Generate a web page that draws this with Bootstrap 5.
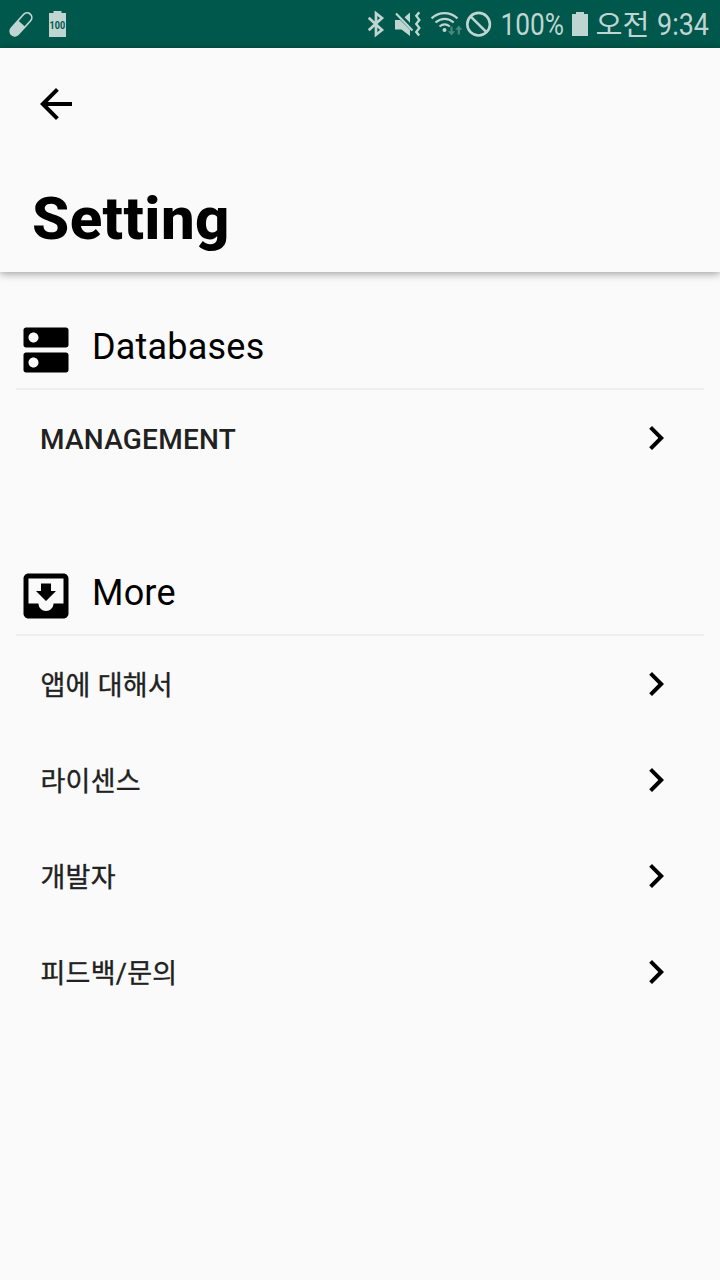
<!DOCTYPE html>
<html lang="ko">
<head>
<meta charset="utf-8">
<meta name="viewport" content="width=device-width, initial-scale=1">
<title>Setting</title>
<link href="https://cdn.jsdelivr.net/npm/bootstrap@5.3.0/dist/css/bootstrap.min.css" rel="stylesheet">
<style>
body{background:#fafafa;color:#000;font-family:Roboto,"Noto Sans CJK KR",sans-serif;min-height:1280px}
svg{display:block;flex:none}
.status-bar{height:48px;background:#00574b;color:#bfd5d2;padding-left:8px}
.app-head{height:224px;padding:32px 32px 0;box-shadow:0 2px 8px rgba(0,0,0,.36)}
.page-title{font-size:60px;line-height:70px;font-weight:850;letter-spacing:.4px;margin-top:56px;margin-bottom:0}
.section-head{height:70px;padding-bottom:8px;border-bottom:2px solid #eee}
.section-title{font-size:36px;line-height:42px;font-weight:400;margin:6px 0 0 16px;letter-spacing:.2px}
.setting-row{height:96px;padding:0 24px;color:#212121;font-size:28px;font-weight:500;line-height:40px}
.setting-row span{padding-top:4px;letter-spacing:.25px}
.setting-row svg{color:#000;margin-bottom:1px}
.korean{font-size:27px;font-weight:400;-webkit-text-stroke:.35px #212121}
.korean span{padding-top:4px;padding-left:.5px}
</style>
</head>
<body>
<header class="status-bar d-flex align-items-center">
  <svg width="68" height="48" viewBox="8 0 68 48" fill="currentColor">
    <g transform="rotate(-48 21 24.3)"><rect x="6.3" y="18.8" width="29.4" height="11" rx="5.5"/><path d="M22 20.4h8a3.9 3.9 0 0 1 0 7.8h-8z" fill="#00574b"/></g>
    <path d="M49 13h4.5v-2h8v2H66v24H49z"/>
    <text x="49.5" y="29" font-size="10.5" font-weight="700" fill="#00574b" textLength="15.6" lengthAdjust="spacingAndGlyphs">100</text>
  </svg>
  <svg class="ms-auto" width="355" height="48" viewBox="365 0 355 48" fill="currentColor">
    <path d="M368.7 17.8 382 30 376 34.7V13.3L382 18 368.7 30.2" fill="none" stroke="currentColor" stroke-width="2.7"/>
    <path d="M395 20h5.2l9.8 9.8V36l-8.5-6.5H395zM404.5 17.2 410 12.5v10.2z"/>
    <path d="m396 13.5 16.5 17" stroke="currentColor" stroke-width="2.2"/>
    <path d="m419.3 12.3-3 3.6 3 4-3 4 3 4-3 4 2.8 3.6" fill="none" stroke="currentColor" stroke-width="2.4"/>
    <g fill="none" stroke="currentColor" stroke-width="2.2"><path d="M431.5 18.3c8-6.8 18-6.8 26 0M435.5 22.5c6-4.8 12.5-4.8 18.2 0M439.5 26.5c3.3-2.6 7-2.6 10.3 0"/></g>
    <circle cx="444.5" cy="30" r="2"/>
    <g opacity=".38"><path d="M450.4 26.5h2.2v4.7h2.6l-3.7 4.3-3.7-4.3h2.6zM457.7 34.5h2.2v-4.7h2.6l-3.7-4.3-3.7 4.3h2.6z"/></g>
    <g fill="none" stroke="currentColor" stroke-width="2.6"><circle cx="478.6" cy="24.2" r="11.3"/><path d="m470.5 16.3 16.2 16"/></g>
    <text x="500.5" y="35" font-size="30.5" textLength="63.5" lengthAdjust="spacingAndGlyphs">100%</text>
    <path d="M572 14h4v-2h8v2h4v22h-16z"/>
    <text x="595.5" y="34.5" font-size="28" font-weight="400" textLength="54" lengthAdjust="spacingAndGlyphs">오전</text>
    <text x="657" y="35" font-size="30.5" textLength="52" lengthAdjust="spacingAndGlyphs">9:34</text>
  </svg>
</header>
<div class="app-head">
  <svg width="48" height="48" viewBox="0 0 24 24"><path d="M20 11H7.83l5.59-5.59L12 4l-8 8 8 8 1.41-1.41L7.83 13H20z"/></svg>
  <h1 class="page-title">Setting</h1>
</div>
<main class="px-3 pt-5">
  <section>
    <div class="section-head d-flex">
      <svg width="60" height="60" viewBox="0 0 24 24"><path d="M20 13H4c-.55 0-1 .45-1 1v6c0 .55.45 1 1 1h16c.55 0 1-.45 1-1v-6c0-.55-.45-1-1-1zM7 19c-1.1 0-2-.9-2-2s.9-2 2-2 2 .9 2 2-.9 2-2 2zM20 3H4c-.55 0-1 .45-1 1v6c0 .55.45 1 1 1h16c.55 0 1-.45 1-1V4c0-.55-.45-1-1-1zM7 9c-1.1 0-2-.9-2-2s.9-2 2-2 2 .9 2 2-.9 2-2 2z"/></svg>
      <h2 class="section-title">Databases</h2>
    </div>
    <div class="setting-row d-flex align-items-center justify-content-between"><span>MANAGEMENT</span><svg width="48" height="48" viewBox="0 0 24 24"><path d="M10 6 8.59 7.41 13.17 12l-4.58 4.59L10 18l6-6z"/></svg></div>
  </section>
  <section style="margin-top:80px">
    <div class="section-head d-flex">
      <svg width="60" height="60" viewBox="0 0 24 24"><path d="M19 3H4.99c-1.11 0-1.98.9-1.98 2L3 19c0 1.1.88 2 1.99 2H19c1.1 0 2-.9 2-2V5c0-1.1-.9-2-2-2zm0 12h-4c0 1.66-1.35 3-3 3s-3-1.34-3-3H4.99V5H19v10zm-3-5h-2V7h-4v3H8l4 4 4-4z"/></svg>
      <h2 class="section-title">More</h2>
    </div>
    <div class="setting-row korean d-flex align-items-center justify-content-between"><span>앱에 대해서</span><svg width="48" height="48" viewBox="0 0 24 24"><path d="M10 6 8.59 7.41 13.17 12l-4.58 4.59L10 18l6-6z"/></svg></div>
    <div class="setting-row korean d-flex align-items-center justify-content-between"><span>라이센스</span><svg width="48" height="48" viewBox="0 0 24 24"><path d="M10 6 8.59 7.41 13.17 12l-4.58 4.59L10 18l6-6z"/></svg></div>
    <div class="setting-row korean d-flex align-items-center justify-content-between"><span>개발자</span><svg width="48" height="48" viewBox="0 0 24 24"><path d="M10 6 8.59 7.41 13.17 12l-4.58 4.59L10 18l6-6z"/></svg></div>
    <div class="setting-row korean d-flex align-items-center justify-content-between"><span>피드백/문의</span><svg width="48" height="48" viewBox="0 0 24 24"><path d="M10 6 8.59 7.41 13.17 12l-4.58 4.59L10 18l6-6z"/></svg></div>
  </section>
</main>
<script src="https://cdn.jsdelivr.net/npm/bootstrap@5.3.0/dist/js/bootstrap.bundle.min.js"></script>
</body>
</html>
